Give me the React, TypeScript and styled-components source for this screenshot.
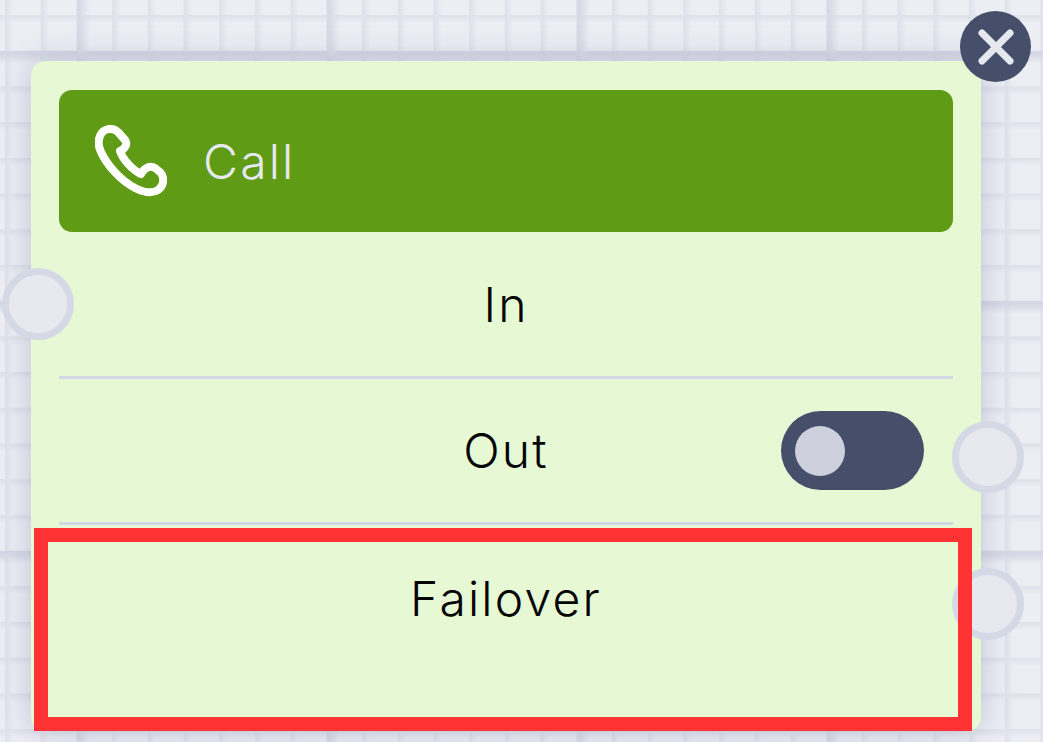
import React from "react";
import styled, { createGlobalStyle } from "styled-components";

const GlobalStyle = createGlobalStyle`
  html,
  body {
    margin: 0;
    padding: 0;
    overflow: hidden;
  }
`;

const Canvas = styled.div`
  box-sizing: border-box;
  width: 1043px;
  height: 742px;
  padding: 61px 0 0 31px;
  overflow: hidden;
  background-color: #eceef4;
  background-image: linear-gradient(90deg, #d6d9e5 0, #dadde7 4px, rgba(236, 238, 244, 0) 13px),
    linear-gradient(180deg, #d3d6e3 0, #d7dae5 4px, rgba(236, 238, 244, 0) 13px),
    linear-gradient(90deg, #dfe1ea 0, #e1e3ec 2px, rgba(236, 238, 244, 0) 8px),
    linear-gradient(180deg, #dfe1ea 0, #e1e3ec 2px, rgba(236, 238, 244, 0) 8px);
  background-size: 250px 100%, 100% 250px, 35.71px 100%, 100% 35.71px;
  background-position: 77px 0, 0 51px, 5px 0, 0 15px;
  background-repeat: repeat;
  font-family: "Inter", "Liberation Sans", sans-serif;
  font-weight: 350;
  font-size: 48px;
  letter-spacing: 2.2px;
`;

const Card = styled.div`
  position: relative;
  box-sizing: border-box;
  display: flex;
  flex-direction: column;
  width: 950px;
  height: 670px;
  padding: 29px 28px 0;
  border-radius: 14px;
  background: #e7f8d4;
  box-shadow: 0 0 30px rgba(160, 164, 188, 0.6);
`;

const Header = styled.div`
  display: flex;
  flex: none;
  align-items: center;
  gap: 36px;
  height: 142px;
  padding-left: 36px;
  border-radius: 13px;
  background: #5f9b14;
  color: #e6e9f0;
`;

const Row = styled.div<{ $divider?: boolean; $height: number }>`
  box-sizing: border-box;
  display: grid;
  flex: none;
  grid-template-columns: 1fr auto 1fr;
  align-items: center;
  height: ${(p) => p.$height}px;
  border-bottom: ${(p) => (p.$divider ? "3px solid #d4d8e5" : "none")};
  color: #050505;
`;

const RowLabel = styled.span`
  grid-column: 2;
`;

const Toggle = styled.div`
  grid-column: 3;
  justify-self: end;
  box-sizing: border-box;
  display: flex;
  align-items: center;
  width: 143px;
  height: 79px;
  margin: 0 29px 0 0;
  padding-left: 14px;
  border-radius: 40px;
  background: #454f6a;
`;

const ToggleKnob = styled.span`
  width: 50px;
  height: 50px;
  border-radius: 50%;
  background: #ced1dd;
`;

const Port = styled.div<{ $side: "left" | "right"; $top: number }>`
  position: absolute;
  top: ${(p) => p.$top}px;
  ${(p) => (p.$side === "left" ? "left: -29px;" : "right: -43px;")}
  box-sizing: border-box;
  width: 72px;
  height: 72px;
  border: 7px solid #d5d9e6;
  border-radius: 50%;
  background: #e8e9ef;
`;

const CloseButton = styled.button`
  position: absolute;
  top: -50px;
  right: -50px;
  display: flex;
  align-items: center;
  justify-content: center;
  width: 71px;
  height: 71px;
  padding: 0;
  border: none;
  border-radius: 50%;
  background: #454f6a;
`;

const Highlight = styled.div`
  position: absolute;
  top: 467px;
  left: 3px;
  box-sizing: border-box;
  width: 938px;
  height: 203px;
  border: 14px solid #ff3333;
`;

const PhoneIcon = () => (
  <svg width="72" height="72" viewBox="95 125 72 72" fill="none">
    <path
      d="M100 136C103 128 113 127 118 132L125 140C128 144 125 149 120 151C122 158 132 170 141 174C144 168 150 165 155 168L160 172C165 177 164 186 158 190C152 194 145 193 135 188C120 180 107 165 101 152C98 146 98 141 100 136Z"
      stroke="#ffffff"
      strokeWidth="8"
      strokeLinejoin="round"
    />
  </svg>
);

const CloseIcon = () => (
  <svg width="40" height="40" viewBox="0 0 40 40" fill="none">
    <path d="M6 6L34 34M34 6L6 34" stroke="#e6e8ef" strokeWidth="7" strokeLinecap="round" />
  </svg>
);

export default function App() {
  return (
    <>
      <GlobalStyle />
      <Canvas>
        <Card>
          <Header>
            <PhoneIcon />
            <span>Call</span>
          </Header>
          <Row $divider $height={147}>
            <RowLabel>In</RowLabel>
          </Row>
          <Row $divider $height={146}>
            <RowLabel>Out</RowLabel>
            <Toggle>
              <ToggleKnob />
            </Toggle>
          </Row>
          <Row $height={146}>
            <RowLabel>Failover</RowLabel>
          </Row>
          <Port $side="left" $top={207} />
          <Port $side="right" $top={360} />
          <Port $side="right" $top={507} />
          <CloseButton aria-label="Close">
            <CloseIcon />
          </CloseButton>
          <Highlight />
        </Card>
      </Canvas>
    </>
  );
}
